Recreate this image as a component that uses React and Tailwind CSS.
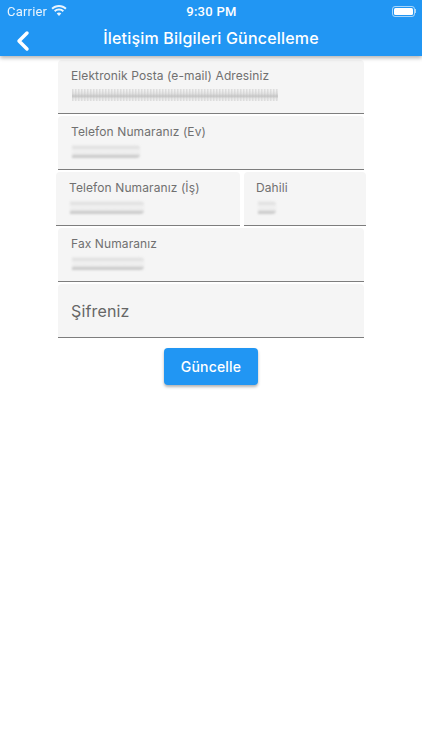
import { ChevronLeft } from "lucide-react";

function WifiIcon() {
  return (
    <svg width="16" height="12" viewBox="0 0 16 12" fill="white">
      <path d="M8 2c2.4 0 4.6.9 6.2 2.5L15.6 3C13.6 1.100 10.900 0 8 0S2.400 1.100.4 3l1.400 1.500C3.400 2.900 5.600 2 8 2z" />
      <path d="M8 5.600c1.400 0 2.600.5 3.600 1.400L13 5.500C11.700 4.300 9.900 3.500 8 3.500s-3.700.8-5 2L4.400 7c1-.9 2.200-1.400 3.600-1.400z" />
      <path d="M8 7.500c-.9 0-1.700.3-2.300.9L8 11l2.300-2.600c-.6-.6-1.400-.9-2.300-.9z" />
    </svg>
  );
}

function Field({ label, value, className, labelClass = "pl-[13px]" }) {
  return (
    <div className={`h-[54px] bg-[#f5f5f5] rounded-t-[4px] border-b-[1.5px] border-[#7d7d7d] ${className}`}>
      <div className={`${labelClass} pt-[8px] text-[12px] leading-[16px] tracking-[0.1px] text-[#707070]`}>{label}</div>
      {value}
    </div>
  );
}

// the value text is smeared out in the screenshot
function EmailBlur() {
  return (
    <div className="ml-[14px] mt-[5px] h-[12px] w-[206px] blur-[0.7px] bg-[linear-gradient(180deg,transparent_15%,rgba(205,205,205,0.45)_40%,rgba(190,190,190,0.8)_60%,rgba(220,220,220,0.4)_80%,transparent_95%),repeating-linear-gradient(90deg,#dddddd_0px,#dddddd_1px,#f0f0f0_2px,#f0f0f0_3px)]" />
  );
}

function PhoneBlur({ width, left = "ml-[14px]" }) {
  return (
    <div className={`${left} mt-[5px] h-[13px] rounded-r-[4px] blur-[0.8px] bg-[linear-gradient(180deg,#f0f0f0_0%,#dedede_15%,#f2f2f2_45%,#ebebeb_70%,#bdbdbd_92%,#dcdcdc_100%)] ${width}`} />
  );
}

export default function App() {
  return (
    <div className="w-[422px] h-[750px] bg-white overflow-hidden font-['Inter',sans-serif]">
      {/* Header */}
      <div className="h-[56px] bg-[#2196f3] shadow-[0_2px_4px_rgba(0,0,0,0.3)] text-white relative z-10">
        <div className="h-[20px] flex items-center justify-between pl-[7px] pr-[6px] pt-[2px] text-[13px] leading-none font-['Roboto',sans-serif]">
          <div className="flex items-center gap-[4px] w-[100px] opacity-90">
            <span className="tracking-[0.2px]">Carrier</span>
            <WifiIcon />
          </div>
          <span className="font-medium tracking-[0.3px]">9:30 PM</span>
          <div className="w-[100px] flex justify-end items-center">
            <div className="w-[23px] h-[11px] rounded-[3px] border border-white/60 p-[1px]">
              <div className="w-full h-full bg-white rounded-[1.5px]" />
            </div>
            <div className="w-[1px] h-[4px] bg-white/60" />
          </div>
        </div>
        <div className="h-[36px] flex items-center relative">
          <ChevronLeft className="ml-[7px] mt-[6px] w-[32px] h-[32px]" strokeWidth={2.6} />
          <span className="absolute left-0 right-0 top-[8px] text-center text-[16px] leading-[20px] font-medium tracking-[0.2px]">
            İletişim Bilgileri Güncelleme
          </span>
        </div>
      </div>

      {/* Form */}
      <div className="pt-[4px] flex flex-col gap-[2px]">
        <Field className="mx-[58px]" label="Elektronik Posta (e-mail) Adresiniz" value={<EmailBlur />} />
        <Field className="mx-[58px]" label="Telefon Numaranız (Ev)" value={<PhoneBlur width="w-[68px]" />} />
        <div className="ml-[56px] flex gap-[4px]">
          <Field className="w-[184px]" label="Telefon Numaranız (İş)" value={<PhoneBlur width="w-[74px]" />} />
          <Field className="w-[122px]" label="Dahili" labelClass="pl-[12px]" value={<PhoneBlur width="w-[18px]" />} />
        </div>
        <Field className="mx-[58px]" label="Fax Numaranız" value={<PhoneBlur width="w-[72px]" />} />
        <div className="mx-[58px] h-[54px] bg-[#f5f5f5] rounded-t-[4px] border-b-[1.5px] border-[#7d7d7d] flex items-center pl-[13px] text-[16px] tracking-[0.15px] text-[#666666]">
          Şifreniz
        </div>
      </div>

      <div className="flex justify-center pt-[10px]">
        <button className="w-[94px] h-[37px] rounded-[4px] bg-[#2196f3] text-white text-[14px] font-medium tracking-[0.2px] shadow-[0_2px_3px_rgba(0,0,0,0.3)]">
          Güncelle
        </button>
      </div>
    </div>
  );
}
